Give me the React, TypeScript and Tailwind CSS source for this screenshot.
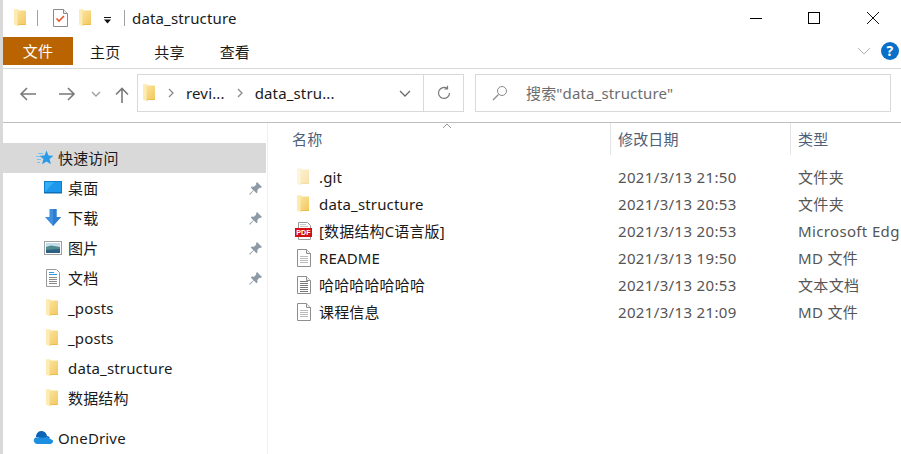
const FONT = "font-['Noto_Sans','Noto_Sans_CJK_SC',sans-serif]";

let gradId = 0;

const Folder = ({ pale = false }: { pale?: boolean }) => {
  const id = `folder-${gradId++}`;
  return (
    <svg width="14" height="18" viewBox="1 0 14 18" className={pale ? "opacity-50" : ""}>
      <defs>
        <linearGradient id={id} x1="0" y1="0" x2="1" y2="1">
          <stop offset="0" stopColor="#fbe9a8" />
          <stop offset="1" stopColor="#f3c75f" />
        </linearGradient>
      </defs>
      <path d="M1 .5h4l1 1h7V16H4z" fill={`url(#${id})`} />
      <path d="M1 .5h3.500V15L6 16v1.500l-3-1-2-1z" fill="#fcecb4" />
      <path d="M4.500 15.200H13v.8H5z" fill="#eab94d" />
    </svg>
  );
};

const Page = ({ dense = false }: { dense?: boolean }) => (
  <svg width="16" height="18" viewBox="0 0 16 18">
    <path d="M1.500.5h9l4 4v13h-13z" fill="#fff" stroke="#8e8e8e" />
    <path d="M10.500.5v4h4" fill="#eee" stroke="#8e8e8e" />
    {(dense ? [5.5, 7.5, 9.5, 11.5, 13.5, 15.5] : [7.5, 9.5, 11.5, 13.5]).map((y) => (
      <path key={y} d={`M4 ${y}h8`} stroke={dense ? "#777" : "#bcbcbc"} />
    ))}
  </svg>
);

const PdfIcon = () => (
  <svg width="18" height="18" viewBox="0 0 18 18">
    <path d="M3.500.5h9l3 3v14h-12z" fill="#fff" stroke="#9a9a9a" />
    <path d="M5 2.500h6M5 4.500h8" stroke="#c8c8c8" />
    <rect x="0" y="6" width="17" height="9" fill="#d40f14" />
    <text x="8.500" y="13" textAnchor="middle" fontSize="7" fontWeight="700" fill="#fff" fontFamily="Liberation Sans">
      PDF
    </text>
  </svg>
);

const Pin = () => (
  <svg width="13" height="13" viewBox="0 0 13 13" className="shrink-0">
    <path d="M8 0l5 5-1.500 1-1-.3L8.300 8l.2 2.200-1 1L4.800 8.500 1 12.800l-.8-.8 4.200-3.800L1.800 5.500l1-1 2.200.2L7.300 2.500 7 1.500z" fill="#8d9aa5" />
  </svg>
);

const Star = () => (
  <svg width="18" height="16" viewBox="0 0 18 16">
    <path d="M10.500 .5l2 5 5 .3-3.900 3.300 1.300 5.200-4.400-2.900-4.400 2.900 1.300-5.200L3.500 5.800l5-.3z" fill="#2a9be8" />
    <path d="M2 3.500h5M0 6.500h4M1 9.500h4M1 12.500h3" stroke="#7cc0f0" />
  </svg>
);

const Desktop = () => (
  <svg width="18" height="14" viewBox="0 0 18 14">
    <rect width="18" height="12" fill="#0a7fd0" />
    <path d="M1 1h16v10H1z" fill="#35aef5" />
    <path d="M1 11l9-10h7v10z" fill="#1e98ea" />
    <rect y="11" width="18" height="1.500" fill="#0d6fb4" />
  </svg>
);

const Download = () => (
  <svg width="18" height="18" viewBox="0 0 18 18">
    <path d="M5.500 0h7v8H17l-8 9-8-9h4.500z" fill="#3f8fdf" />
    <path d="M9 0h3.500v8H17l-8 9z" fill="#2f7cd0" />
  </svg>
);

const Pictures = () => (
  <svg width="18" height="14" viewBox="0 0 18 14">
    <rect x=".5" y=".5" width="17" height="13" fill="#fff" stroke="#a0a0a0" />
    <rect x="2" y="2" width="14" height="4" fill="#c5dcea" />
    <path d="M2 6l5-1.500 9 1.500v6H2z" fill="#4f8a8c" />
    <path d="M2 9l14-1v4H2z" fill="#2d5f87" />
  </svg>
);

const Documents = () => (
  <svg width="16" height="18" viewBox="0 0 16 18">
    <path d="M1.500.5h10l3 3v14h-13z" fill="#fff" stroke="#9a9a9a" />
    <path d="M4 3.500h5M4 5.500h8" stroke="#2f9ae0" />
    <path d="M4 8.500h8M4 10.500h8M4 12.500h8M4 14.500h8" stroke="#8a8a8a" />
  </svg>
);

const OneDriveIcon = () => (
  <svg width="20" height="14" viewBox="0 0 20 14">
    <path d="M3 6a5.500 5.500 0 0 1 11-1 4 4 0 0 1 3 2H7z" fill="#0c64b8" />
    <path d="M7 6.500l3 .3 4-1 6 3.700a3 3 0 0 1-3 3.500H4a3.500 3.500 0 0 1-1.500-6.500z" fill="#1c8fe0" />
  </svg>
);

const quickItems = [
  { name: "桌面", icon: <Desktop />, pin: true },
  { name: "下载", icon: <Download />, pin: true },
  { name: "图片", icon: <Pictures />, pin: true },
  { name: "文档", icon: <Documents />, pin: true },
  { name: "_posts", icon: <Folder /> },
  { name: "_posts", icon: <Folder /> },
  { name: "data_structure", icon: <Folder /> },
  { name: "数据结构", icon: <Folder /> },
];

const files = [
  { name: ".git", icon: <Folder pale />, date: "2021/3/13 21:50", type: "文件夹" },
  { name: "data_structure", icon: <Folder />, date: "2021/3/13 20:53", type: "文件夹" },
  { name: "[数据结构C语言版]", icon: <PdfIcon />, date: "2021/3/13 20:53", type: "Microsoft Edg" },
  { name: "README", icon: <Page />, date: "2021/3/13 19:50", type: "MD 文件" },
  { name: "哈哈哈哈哈哈哈", icon: <Page dense />, date: "2021/3/13 20:53", type: "文本文档" },
  { name: "课程信息", icon: <Page />, date: "2021/3/13 21:09", type: "MD 文件" },
];

const TitleBar = () => (
  <div className="flex h-[37px] items-center pb-[1px] pl-[9px]">
    <div className="flex w-[18px] justify-center"><Folder /></div>
    <div className="ml-[7px] h-[16px] w-px bg-[#a0a0a0]" />
    <div className="ml-[15px]">
      <svg width="15" height="18" viewBox="0 0 15 18">
        <path d="M.5.5h10l4 4v13H.5z" fill="#fff" stroke="#8a8a8a" />
        <path d="M10.500.5v4h4" fill="#eee" stroke="#8a8a8a" />
        <path d="M3.500 9.500l2.500 2.500 5-5" fill="none" stroke="#e8552a" strokeWidth="1.600" />
      </svg>
    </div>
    <div className="ml-[11px]"><Folder /></div>
    <svg width="7" height="7" viewBox="0 0 7 7" className="ml-[11px] mt-[4px]">
      <path d="M0 0h7v1H0zM0 2.500h7L3.500 6.500z" fill="#111" />
    </svg>
    <div className="ml-[13px] h-[16px] w-px bg-[#a0a0a0]" />
    <span className="ml-[7px] text-[#1a1a1a]">data_structure</span>
    <div className="ml-auto flex items-center pr-[22px]">
      <div className="h-px w-[12px] bg-black" />
      <div className="ml-[46px] h-[12px] w-[12px] border border-black" />
      <svg width="12" height="12" viewBox="0 0 12 12" className="ml-[47px]">
        <path d="M0 0l12 12M12 0L0 12" stroke="#111" />
      </svg>
    </div>
  </div>
);

const RibbonTabs = () => (
  <div className="flex h-[32px] border-b border-[#d9d9d9] pb-[3px] text-[#1a1a1a]">
    <div className="flex h-[28px] w-[70px] items-center justify-center bg-[#b96400] text-white">文件</div>
    <span className="ml-[17px] leading-[30px]">主页</span>
    <span className="ml-[34px] leading-[30px]">共享</span>
    <span className="ml-[35px] leading-[30px]">查看</span>
    <div className="ml-auto flex items-center pb-[1px] pr-[2px]">
      <svg width="14" height="8" viewBox="0 0 14 8">
        <path d="M1 1l6 6 6-6" fill="none" stroke="#b5b5b5" />
      </svg>
      <div className="ml-[10px] flex h-[18px] w-[18px] items-center justify-center rounded-full bg-[#0a6fc9] text-[14px] font-bold leading-none text-white">
        ?
      </div>
    </div>
  </div>
);

const AddressBar = () => (
  <div className="flex h-[54px] items-center border-b border-[#bfbfbf] pb-[5px] pr-[10px]">
    <svg width="18" height="14" viewBox="0 0 18 14" className="ml-[16px] mt-[2px]">
      <path d="M17 7H2M8 1L2 7l6 6" fill="none" stroke="#7a7a7a" strokeWidth="1.600" />
    </svg>
    <svg width="18" height="14" viewBox="0 0 18 14" className="ml-[21px] mt-[2px]">
      <path d="M1 7h15M10 1l6 6-6 6" fill="none" stroke="#7a7a7a" strokeWidth="1.600" />
    </svg>
    <svg width="10" height="6" viewBox="0 0 10 6" className="ml-[15px] mt-[2px]">
      <path d="M1 1l4 4 4-4" fill="none" stroke="#a0a0a0" strokeWidth="1.400" />
    </svg>
    <svg width="14" height="16" viewBox="0 0 14 16" className="ml-[14px] mt-[4px]">
      <path d="M7 16V1.500M1 7.500l6-6 6 6" fill="none" stroke="#7a7a7a" strokeWidth="1.600" />
    </svg>
    <div className="ml-[8px] flex h-[38px] w-[327px] items-center border border-[#d9d9d9] text-[#1a1a1a]">
      <div className="ml-[5px]"><Folder /></div>
      <svg width="6" height="10" viewBox="0 0 6 10" className="ml-[11px]">
        <path d="M1 1l4 4-4 4" fill="none" stroke="#8a8a8a" strokeWidth="1.300" />
      </svg>
      <span className="ml-[12px]">revi...</span>
      <svg width="6" height="10" viewBox="0 0 6 10" className="ml-[12px]">
        <path d="M1 1l4 4-4 4" fill="none" stroke="#8a8a8a" strokeWidth="1.300" />
      </svg>
      <span className="ml-[12px]">data_stru...</span>
      <svg width="12" height="7" viewBox="0 0 12 7" className="ml-auto mr-[12px]">
        <path d="M1 1l5 5 5-5" fill="none" stroke="#6a6a6a" strokeWidth="1.300" />
      </svg>
      <div className="flex h-full w-[40px] items-center justify-center border-l border-[#d9d9d9]">
        <svg width="16" height="16" viewBox="0 0 16 16">
          <path d="M13.500 8a5.500 5.500 0 1 1-2-4.300M11.500 .8v3.200H8.300" fill="none" stroke="#7a7a7a" strokeWidth="1.200" />
        </svg>
      </div>
    </div>
    <div className="ml-[11px] flex h-[38px] flex-1 items-center border border-[#d9d9d9] text-[#6d6d6d]">
      <svg width="16" height="16" viewBox="0 0 16 16" className="ml-[16px]">
        <circle cx="10" cy="6" r="4.500" fill="none" stroke="#8a8a8a" />
        <path d="M6.500 9.500L1 15" stroke="#8a8a8a" strokeWidth="1.200" />
      </svg>
      <span className="ml-[18px]">搜索"data_structure"</span>
    </div>
  </div>
);

const Sidebar = () => (
  <div className="flex w-[265px] shrink-0 flex-col border-r border-[#f0f0f0] pt-[20px] text-[#1a1a1a]">
    <div className="flex h-[30px] w-[263px] items-center bg-[#d9d9d9] pl-[33px]">
      <Star />
      <span className="ml-[4px]">快速访问</span>
    </div>
    {quickItems.map((item, i) => (
      <div key={i} className="flex h-[30px] items-center pl-[41px] pr-[5px]">
        <div className="flex w-[18px] justify-center">{item.icon}</div>
        <span className="ml-[6px] flex-1">{item.name}</span>
        {item.pin && <Pin />}
      </div>
    ))}
    <div className="mt-[10px] flex h-[30px] items-center pl-[30px]">
      <OneDriveIcon />
      <span className="ml-[5px]">OneDrive</span>
    </div>
  </div>
);

const FileList = () => (
  <div className="relative min-w-0 flex-1 overflow-hidden">
    <svg width="10" height="5" viewBox="0 0 10 5" className="absolute left-[174px] top-[0px]">
      <path d="M1 5l4-4 4 4" fill="none" stroke="#9a9a9a" />
    </svg>
    <div className="flex h-[32px] text-[#4c607a]">
      <div className="flex w-[342px] shrink-0 items-center pl-[24px]">名称</div>
      <div className="flex w-[180px] shrink-0 items-center border-l border-[#e5e5e5] pl-[7px]">修改日期</div>
      <div className="flex flex-1 items-center border-l border-[#e5e5e5] pl-[7px]">类型</div>
    </div>
    <div className="pt-[9px] whitespace-nowrap">
      {files.map((f) => (
        <div key={f.name} className="flex h-[27px] items-center text-[#555]">
          <div className="flex w-[342px] shrink-0 items-center pl-[27px] text-[#1a1a1a]">
            <div className="-mt-[1px] flex w-[18px] justify-center">{f.icon}</div>
            <span className="ml-[6px]">{f.name}</span>
          </div>
          <div className="w-[180px] shrink-0 pl-[8px] tracking-[0.35px]">{f.date}</div>
          <div className="pl-[8px] tracking-[0.35px]">{f.type}</div>
        </div>
      ))}
    </div>
  </div>
);

export default function App() {
  return (
    <div className={`${FONT} flex h-[454px] w-[901px] overflow-hidden bg-white text-[15px] tracking-[0.15px]`}>
      <div className="w-[3px] shrink-0 bg-[#d9d9d9]" />
      <div className="flex min-w-0 flex-1 flex-col">
        <TitleBar />
        <RibbonTabs />
        <AddressBar />
        <div className="flex min-h-0 flex-1">
          <Sidebar />
          <FileList />
        </div>
      </div>
    </div>
  );
}
